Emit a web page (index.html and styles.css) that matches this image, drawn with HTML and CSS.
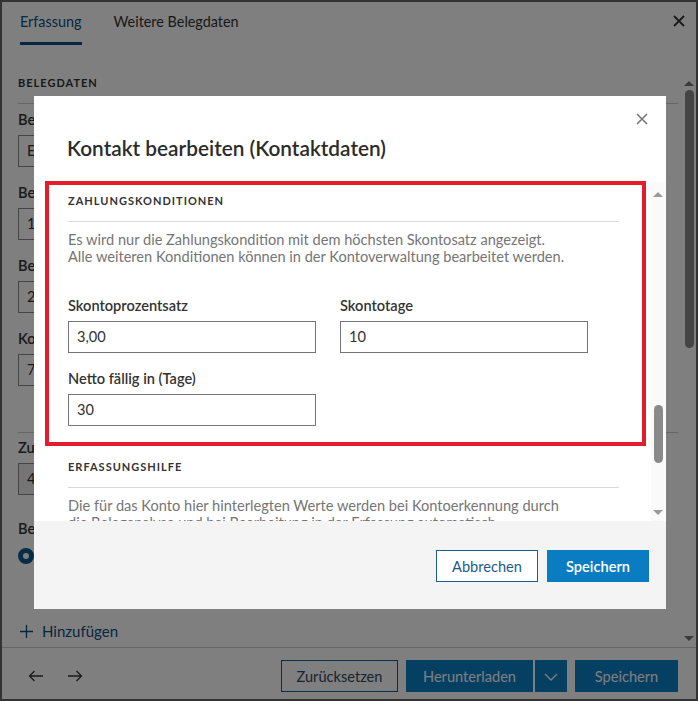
FILE: index.html
```html
<!DOCTYPE html>
<html lang="de">
<head>
<meta charset="utf-8">
<title>Kontakt bearbeiten</title>
<link rel="stylesheet" href="styles.css">
</head>
<body>
<div class="app">
  <div class="bg-header">
    <div class="tabs">
      <div class="tab active">Erfassung</div>
      <div class="tab">Weitere Belegdaten</div>
    </div>
    <svg class="bg-close" width="12" height="12" viewBox="0 0 12 12"><path d="M1 1L11 11M11 1L1 11" stroke="#333" stroke-width="1.8"/></svg>
  </div>
  <div class="bg-main">
    <div class="bg-content">
      <div class="bg-section-title">BELEGDATEN</div>
      <div class="bg-label">Belegart</div>
      <div class="bg-input">Eingangsrechnung</div>
      <div class="bg-label">Belegnummer</div>
      <div class="bg-input">12345</div>
      <div class="bg-label">Belegdatum</div>
      <div class="bg-input">21.03.2024</div>
      <div class="bg-label">Konto</div>
      <div class="bg-input">70000</div>
      <div class="bg-divider"></div>
      <div class="bg-label">Zuordnung</div>
      <div class="bg-input disabled">4400</div>
      <div class="bg-label gap">Belegstatus</div>
      <div class="bg-radio"><span class="radio"></span></div>
      <div class="bg-add"><svg class="plus" width="13" height="13" viewBox="0 0 13 13"><path d="M6.5 0V13M0 6.5H13" stroke="#0a4f80" stroke-width="1.3"/></svg>Hinzufügen</div>
    </div>
    <div class="bg-scroll">
      <span class="arr up"></span>
      <span class="bg-thumb"></span>
      <span class="arr down"></span>
    </div>
  </div>
  <div class="bg-footer">
    <div class="nav-arrows">
      <svg width="16" height="12" viewBox="0 0 16 12"><path d="M15 6H1.5M6.5 1L1.5 6L6.5 11" fill="none" stroke="#333" stroke-width="1.3"/></svg>
      <svg width="16" height="12" viewBox="0 0 16 12"><path d="M1 6H14.5M9.5 1L14.5 6L9.5 11" fill="none" stroke="#333" stroke-width="1.3"/></svg>
    </div>
    <div class="bg-actions">
      <button class="btn-outline-bg">Zurücksetzen</button>
      <div class="split">
        <button class="btn-fill-bg">Herunterladen</button>
        <button class="btn-fill-bg drop"><svg width="14" height="8" viewBox="0 0 14 8"><path d="M1 1L7 7L13 1" fill="none" stroke="#fff" stroke-width="1.3"/></svg></button>
      </div>
      <button class="btn-fill-bg save">Speichern</button>
    </div>
  </div>
</div>
<div class="overlay"></div>
<div class="modal">
  <div class="modal-header">
    <h1 class="modal-title">Kontakt bearbeiten (Kontaktdaten)</h1>
    <svg class="modal-close" width="12" height="12" viewBox="0 0 12 12"><path d="M1 1L11 11M11 1L1 11" stroke="#777" stroke-width="1.6"/></svg>
  </div>
  <div class="modal-body">
    <div class="modal-content">
      <div class="section-title">ZAHLUNGSKONDITIONEN</div>
      <p class="desc">Es wird nur die Zahlungskondition mit dem höchsten Skontosatz angezeigt.<br>Alle weiteren Konditionen können in der Kontoverwaltung bearbeitet werden.</p>
      <div class="form-grid">
        <div class="field">
          <label class="label">Skontoprozentsatz</label>
          <div class="input">3,00</div>
        </div>
        <div class="field">
          <label class="label">Skontotage</label>
          <div class="input">10</div>
        </div>
        <div class="field">
          <label class="label">Netto fällig in (Tage)</label>
          <div class="input">30</div>
        </div>
      </div>
      <div class="section-title second">ERFASSUNGSHILFE</div>
      <p class="desc">Die für das Konto hier hinterlegten Werte werden bei Kontoerkennung durch<br>die Beleganalyse und bei Bearbeitung in der Erfassung automatisch<br>übernommen.</p>
    </div>
    <div class="modal-scroll">
      <span class="arr up small"></span>
      <span class="m-thumb"></span>
      <span class="arr down small"></span>
    </div>
  </div>
  <div class="modal-footer">
    <button class="btn-outline">Abbrechen</button>
    <button class="btn-primary">Speichern</button>
  </div>
  <div class="highlight"></div>
</div>
</body>
</html>
```

FILE: styles.css
```css
* { box-sizing: border-box; }
html, body { margin: 0; padding: 0; }
body {
  width: 698px;
  height: 701px;
  overflow: hidden;
  font-family: Lato, "Open Sans", sans-serif;
  font-size: 14.6px;
  color: #333;
  position: relative;
}
.app {
  width: 698px;
  height: 701px;
  border: 2px solid #666;
  background: #fff;
  display: flex;
  flex-direction: column;
}
/* background header */
.bg-header {
  display: flex;
  justify-content: space-between;
  align-items: flex-start;
  height: 43px;
}
.tabs {
  display: flex;
  gap: 32px;
  padding-left: 18px;
}
.tab {
  font-size: 14.4px;
  line-height: 20px;
  padding: 10px 0 10px;
  border-bottom: 3px solid transparent;
  color: #333;
}
.tab.active {
  color: #0a4f80;
  border-bottom-color: #0a4f80;
}
.bg-close { margin: 13px 11px 0 0; }

.bg-main {
  flex: 1;
  display: flex;
  min-height: 0;
}
.bg-content {
  flex: 1;
  padding-left: 16px;
  display: flex;
  flex-direction: column;
  align-items: flex-start;
  overflow: hidden;
}
.bg-section-title {
  margin-top: 30px;
  font-size: 11px;
  font-weight: 700;
  letter-spacing: 1px;
  line-height: 16px;
  padding-bottom: 12px;
  border-bottom: 1px solid #ccc;
  width: 660px;
}
.bg-label {
  margin-top: 16px;
  line-height: 20px;
  font-weight: 600;
}
.bg-section-title + .bg-label { margin-top: 6px; }
.bg-label.gap { margin-top: 24px; }
.bg-input {
  margin-top: 5px;
  width: 300px;
  height: 32px;
  border: 1px solid #888;
  padding-left: 8px;
  line-height: 30px;
}
.bg-input.disabled { background: #ebebeb; }
.bg-divider {
  margin-top: 46px;
  width: 660px;
  border-top: 1px solid #ccc;
}
.bg-divider + .bg-label { margin-top: 5px; }
.bg-radio { margin-top: 9px; height: 16px; }
.radio {
  display: block;
  width: 16px;
  height: 16px;
  border-radius: 50%;
  border: 5px solid #0a5a8e;
  background: #fff;
}
.bg-add {
  margin-top: 57px;
  line-height: 20px;
  color: #0a4f80;
  font-size: 15px;
  padding-left: 2px;
  display: flex;
  align-items: center;
}
.plus { margin-right: 9px; }
.bg-scroll {
  width: 12px;
  margin-right: 1px;
  display: flex;
  flex-direction: column;
  align-items: center;
  padding-top: 36px;
  padding-bottom: 6px;
}
.bg-thumb {
  display: block;
  width: 9px;
  height: 258px;
  border-radius: 5px;
  background: #888;
  margin-top: 4px;
}
.bg-scroll .down { margin-top: auto; }
.arr {
  display: block;
  width: 0;
  height: 0;
  border-left: 5px solid transparent;
  border-right: 5px solid transparent;
}
.arr.up { border-bottom: 5px solid #777; }
.arr.down { border-top: 5px solid #777; }
.arr.small.up { border-bottom-color: #999; }
.arr.small.down { border-top-color: #999; }

.bg-footer {
  height: 52px;
  border-top: 1px solid #ccc;
  display: flex;
  justify-content: space-between;
  align-items: flex-start;
  padding: 12px 18px 0 26px;
}
.nav-arrows {
  display: flex;
  gap: 23px;
  padding-top: 10px;
}
.bg-actions { display: flex; gap: 8px; }
.split { display: flex; gap: 2px; }
button {
  font-family: inherit;
  font-size: 14.6px;
  height: 32px;
  border-radius: 0;
  cursor: pointer;
}
.btn-outline-bg {
  width: 117px;
  background: #fff;
  border: 1px solid #0a5d94;
  color: #2a4a62;
}
.btn-fill-bg {
  background: #0a7ec4;
  border: none;
  color: #fff;
  width: 127px;
}
.btn-fill-bg.drop {
  width: 32px;
  display: flex;
  align-items: center;
  justify-content: center;
  padding-top: 3px;
}
.btn-fill-bg.save { width: 103px; }

.overlay {
  position: absolute;
  left: 0;
  top: 0;
  width: 698px;
  height: 701px;
  background: rgba(0, 0, 0, 0.5);
}

/* modal */
.modal {
  position: absolute;
  left: 34px;
  top: 96px;
  width: 632px;
  height: 513px;
  background: #fff;
  display: flex;
  flex-direction: column;
}
.modal-header {
  height: 86px;
  position: relative;
  padding: 38px 0 0 33px;
}
.modal-title {
  margin: 0;
  font-size: 20.8px;
  line-height: 28px;
  font-weight: 600;
  color: #2b2b2b;
}
.modal-close {
  position: absolute;
  right: 18px;
  top: 17px;
}
.modal-body {
  height: 339px;
  display: flex;
}
.modal-content {
  flex: 1;
  overflow: hidden;
  padding: 11px 32px 0 34px;
}
.section-title {
  font-size: 11px;
  font-weight: 700;
  letter-spacing: 1px;
  line-height: 16px;
  padding-bottom: 12px;
  border-bottom: 1px solid #d9d9d9;
  color: #333;
}
.section-title.second { margin-top: 33px; }
.desc {
  margin: 9px 0 0;
  color: #757575;
  line-height: 17px;
}
.form-grid {
  margin-top: 31px;
  display: grid;
  grid-template-columns: 248px 248px;
  column-gap: 24px;
  row-gap: 16px;
}
.field { display: flex; flex-direction: column; }
.label {
  font-weight: 600;
  line-height: 20px;
  color: #333;
}
.input {
  margin-top: 5px;
  height: 32px;
  border: 1px solid #767676;
  line-height: 30px;
  padding-left: 8px;
  color: #333;
}
.modal-scroll {
  width: 14px;
  margin-right: 1px;
  background: #fafafa;
  display: flex;
  flex-direction: column;
  align-items: center;
  padding-top: 10px;
  padding-bottom: 6px;
}
.m-thumb {
  display: block;
  width: 9px;
  height: 58px;
  border-radius: 5px;
  background: #8a8a8a;
  margin-top: auto;
  margin-bottom: 47px;
}
.modal-footer {
  flex: 1;
  background: #f4f4f4;
  display: flex;
  justify-content: flex-end;
  align-items: flex-start;
  gap: 9px;
  padding: 29px 17px 0 0;
}
.btn-outline {
  width: 102px;
  background: #fff;
  border: 1px solid #1b5e8e;
  color: #1d5b8a;
}
.btn-primary {
  width: 102px;
  background: #0a7dc2;
  border: none;
  color: #fff;
  font-weight: 600;
}
.highlight {
  position: absolute;
  left: 11px;
  top: 85px;
  width: 601px;
  height: 265px;
  border: 4px solid #e31d2d;
}
```
